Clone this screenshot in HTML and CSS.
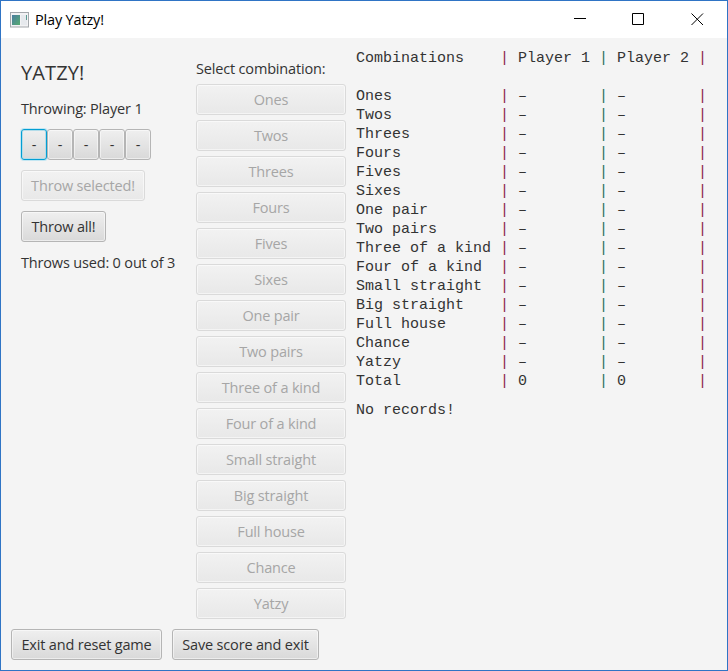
FILE: index.html
```html
<!DOCTYPE html>
<html lang="en">
<head>
<meta charset="utf-8">
<title>Play Yatzy!</title>
<link rel="stylesheet" href="styles.css">
</head>
<body>
<div class="window">
  <header class="titlebar">
    <svg class="app-icon" width="19" height="16" viewBox="0 0 19 16">
      <defs><linearGradient id="g" x1="0" y1="0" x2="1" y2="1"><stop offset="0" stop-color="#4a7da0"/><stop offset="1" stop-color="#56ab70"/></linearGradient></defs>
      <rect x=".5" y=".5" width="18" height="14.5" fill="#f2f2f4" stroke="#a4a8ac"/>
      <rect x="2" y="3" width="8" height="10" fill="url(#g)"/>
      <rect x="11" y="3" width="6" height="10" fill="#e6e9ed"/>
      <rect x="16" y="3" width="1" height="5" fill="#5b9b92"/>
    </svg>
    <span class="title">Play Yatzy!</span>
    <svg class="controls" width="132" height="14" viewBox="0 0 132 14" fill="none" stroke="#000">
      <path d="M0 5.500h12"/>
      <path d="M58.5 .500h11v11h-11z"/>
      <path d="M117.500 .500l11.500 11.500M129 .500l-11.500 11.500"/>
    </svg>
  </header>
  <main class="content">
    <section class="game">
      <h1>YATZY!</h1>
      <p class="label throwing">Throwing: Player 1</p>
      <div class="dice">
        <button class="btn focused">-</button><button class="btn">-</button><button class="btn">-</button><button class="btn">-</button><button class="btn">-</button>
      </div>
      <button class="btn selected" disabled>Throw selected!</button>
      <button class="btn all">Throw all!</button>
      <p class="label used">Throws used: 0 out of 3</p>
    </section>
    <section class="combos">
      <p class="label select">Select combination:</p>
      <button class="btn" disabled>Ones</button>
      <button class="btn" disabled>Twos</button>
      <button class="btn" disabled>Threes</button>
      <button class="btn" disabled>Fours</button>
      <button class="btn" disabled>Fives</button>
      <button class="btn" disabled>Sixes</button>
      <button class="btn" disabled>One pair</button>
      <button class="btn" disabled>Two pairs</button>
      <button class="btn" disabled>Three of a kind</button>
      <button class="btn" disabled>Four of a kind</button>
      <button class="btn" disabled>Small straight</button>
      <button class="btn" disabled>Big straight</button>
      <button class="btn" disabled>Full house</button>
      <button class="btn" disabled>Chance</button>
      <button class="btn" disabled>Yatzy</button>
    </section>
    <section class="scores">
<pre>Combinations    <i>|</i> Player 1 <b>|</b> Player 2 <i>|</i>

Ones            <i>|</i> –        <b>|</b> –        <i>|</i>
Twos            <i>|</i> –        <b>|</b> –        <i>|</i>
Threes          <i>|</i> –        <b>|</b> –        <i>|</i>
Fours           <i>|</i> –        <b>|</b> –        <i>|</i>
Fives           <i>|</i> –        <b>|</b> –        <i>|</i>
Sixes           <i>|</i> –        <b>|</b> –        <i>|</i>
One pair        <i>|</i> –        <b>|</b> –        <i>|</i>
Two pairs       <i>|</i> –        <b>|</b> –        <i>|</i>
Three of a kind <i>|</i> –        <b>|</b> –        <i>|</i>
Four of a kind  <i>|</i> –        <b>|</b> –        <i>|</i>
Small straight  <i>|</i> –        <b>|</b> –        <i>|</i>
Big straight    <i>|</i> –        <b>|</b> –        <i>|</i>
Full house      <i>|</i> –        <b>|</b> –        <i>|</i>
Chance          <i>|</i> –        <b>|</b> –        <i>|</i>
Yatzy           <i>|</i> –        <b>|</b> –        <i>|</i>
Total           <i>|</i> 0        <b>|</b> 0        <i>|</i></pre>
<pre class="records">No records!</pre>
    </section>
  </main>
  <footer class="actions">
    <button class="btn exit">Exit and reset game</button>
    <button class="btn save">Save score and exit</button>
  </footer>
</div>
</body>
</html>
```
FILE: styles.css
```css
* { box-sizing: border-box; }
body { margin: 0; font-family: "Open Sans", sans-serif; font-size: 14.5px; letter-spacing: -0.17px; color: #333; }
.window { width: 728px; height: 671px; border: 1px solid #2f74c5; background: #f4f4f4; display: flex; flex-direction: column; }
.titlebar { height: 37px; background: #fff; display: flex; align-items: center; padding-left: 9px; color: #000; }
.title { margin-left: 6px; flex: 1; line-height: 20px; padding-top: 1px; }
.controls { margin-right: 21px; }
.content { height: 581px; display: flex; }
h1 { margin: 0; font-size: 20px; font-weight: 400; line-height: 26px; letter-spacing: 0.1px; }
.label { margin: 0; line-height: 20px; white-space: nowrap; }
.game { width: 175px; margin-left: 20px; padding-top: 22px; display: flex; flex-direction: column; align-items: flex-start; }
.throwing { margin-top: 13px; }
.dice { display: flex; margin: 10px 0; }
.dice .btn { width: 26px; }
.btn { height: 31px; margin: 0; padding: 0; font: inherit; letter-spacing: inherit; color: #333; white-space: nowrap; line-height: 27px; border: 1px solid #b5b5b5; border-radius: 3px; background: linear-gradient(#efefef, #d9d9d9); box-shadow: inset 0 0 0 1px rgba(255,255,255,.5); }
.btn:disabled { color: #a6a6a6; border-color: #dadada; background: linear-gradient(#f2f2f2, #e8e8e8); }
.btn.focused { border-color: #039ed3; box-shadow: 0 0 0 1px #c3e6f2, inset 0 0 0 1px #b3dce9; }
.selected { width: 124px; }
.all { width: 85px; margin-top: 10px; }
.used { margin-top: 11px; }
.combos { width: 150px; padding-top: 21px; display: flex; flex-direction: column; gap: 5px; }
.scores { margin-left: 10px; padding-top: 11px; }
pre { margin: 0; font: 15px/19px "Liberation Mono", monospace; letter-spacing: 0; }
pre i, pre b { font: inherit; color: #8c1f48; }
pre b { color: #1f6f5c; }
.records { margin-top: 10px; }
.actions { display: flex; gap: 10px; padding: 10px; }
.exit { width: 151px; }
.save { width: 147px; }
```
